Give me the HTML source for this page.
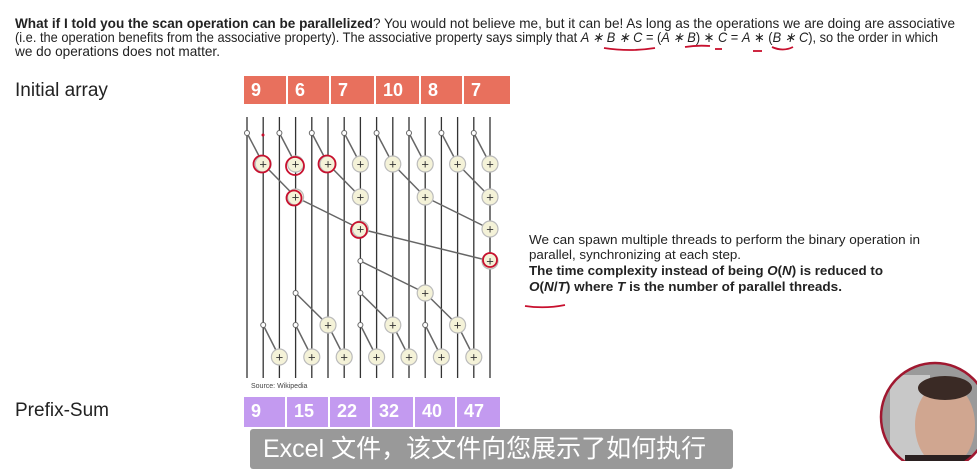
<!DOCTYPE html>
<html><head><meta charset="utf-8"><style>
body{margin:0;width:977px;height:461px;background:#fff;overflow:hidden;position:relative;font-family:"Liberation Sans","Noto Sans CJK SC",sans-serif;color:#222}
.lbl{position:absolute;left:15px;font-size:19px;color:#222}
.arr{position:absolute;display:flex;height:28px}
.arr div{color:#fff;font-weight:bold;font-size:18px;line-height:28px;padding-left:7px;box-sizing:border-box;border-right:2px solid #fff}
.sub{position:absolute;left:250px;top:429px;width:483px;height:40px;background:#999;border-radius:3px;color:#fff;font-size:25px;line-height:40px;padding-left:13px;box-sizing:border-box;overflow:hidden;white-space:nowrap}
</style></head><body>
<div class="lbl" style="top:80px">Initial array</div>
<div class="arr" style="left:244px;top:76px;background:#e8705d">
<div style="width:44px">9</div><div style="width:43px">6</div><div style="width:45px">7</div><div style="width:45px">10</div><div style="width:43px">8</div><div style="width:46px;border:0">7</div></div>
<div class="lbl" style="top:400px">Prefix-Sum</div>
<div class="arr" style="left:244px;top:397px;height:30px;background:#c39af0">
<div style="width:43px">9</div><div style="width:43px">15</div><div style="width:42px">22</div><div style="width:43px">32</div><div style="width:42px">40</div><div style="width:43px;border:0">47</div></div>
<svg width="977" height="461" style="position:absolute;left:0;top:0">
<g font-family="Liberation Sans" font-size="14" fill="#222">
<text x="15" y="28" textLength="940" lengthAdjust="spacingAndGlyphs"><tspan font-weight="bold">What if I told you the scan operation can be parallelized</tspan>? You would not believe me, but it can be! As long as the operations we are doing are associative</text>
<text x="15" y="42" textLength="923" lengthAdjust="spacingAndGlyphs">(i.e. the operation benefits from the associative property). The associative property says simply that <tspan font-style="italic">A ∗ B ∗ C</tspan> = (<tspan font-style="italic">A ∗ B</tspan>) ∗ <tspan font-style="italic">C</tspan> = <tspan font-style="italic">A</tspan> ∗ (<tspan font-style="italic">B ∗ C</tspan>), so the order in which</text>
<text x="15" y="56" textLength="205" lengthAdjust="spacingAndGlyphs">we do operations does not matter.</text>
</g>
<g font-family="Liberation Sans" font-size="13" fill="#222">
<text x="529" y="244" textLength="391" lengthAdjust="spacingAndGlyphs">We can spawn multiple threads to perform the binary operation in</text>
<text x="529" y="259" textLength="212" lengthAdjust="spacingAndGlyphs">parallel, synchronizing at each step.</text>
<text x="529" y="275" font-weight="bold" textLength="354" lengthAdjust="spacingAndGlyphs">The time complexity instead of being <tspan font-style="italic">O</tspan>(<tspan font-style="italic">N</tspan>) is reduced to</text>
<text x="529" y="291" font-weight="bold" textLength="313" lengthAdjust="spacingAndGlyphs"><tspan font-style="italic">O</tspan>(<tspan font-style="italic">N</tspan>/<tspan font-style="italic">T</tspan>) where <tspan font-style="italic">T</tspan> is the number of parallel threads.</text>
</g>
<g stroke="#333" stroke-width="1.3">
<line x1="247" y1="117" x2="247" y2="378"/><line x1="263.2" y1="117" x2="263.2" y2="378"/><line x1="279.4" y1="117" x2="279.4" y2="378"/><line x1="295.6" y1="117" x2="295.6" y2="378"/><line x1="311.8" y1="117" x2="311.8" y2="378"/><line x1="328" y1="117" x2="328" y2="378"/><line x1="344.2" y1="117" x2="344.2" y2="378"/><line x1="360.4" y1="117" x2="360.4" y2="378"/><line x1="376.6" y1="117" x2="376.6" y2="378"/><line x1="392.8" y1="117" x2="392.8" y2="378"/><line x1="409" y1="117" x2="409" y2="378"/><line x1="425.2" y1="117" x2="425.2" y2="378"/><line x1="441.4" y1="117" x2="441.4" y2="378"/><line x1="457.6" y1="117" x2="457.6" y2="378"/><line x1="473.8" y1="117" x2="473.8" y2="378"/><line x1="490" y1="117" x2="490" y2="378"/>
</g>
<g stroke="#666" stroke-width="1.5">
<line x1="247" y1="133" x2="263.2" y2="164"/><line x1="279.4" y1="133" x2="295.6" y2="164"/><line x1="311.8" y1="133" x2="328" y2="164"/><line x1="344.2" y1="133" x2="360.4" y2="164"/><line x1="376.6" y1="133" x2="392.8" y2="164"/><line x1="409" y1="133" x2="425.2" y2="164"/><line x1="441.4" y1="133" x2="457.6" y2="164"/><line x1="473.8" y1="133" x2="490" y2="164"/>
<line x1="263.2" y1="164" x2="295.6" y2="197"/><line x1="328" y1="164" x2="360.4" y2="197"/><line x1="392.8" y1="164" x2="425.2" y2="197"/><line x1="457.6" y1="164" x2="490" y2="197"/>
<line x1="295.6" y1="197" x2="360.4" y2="229"/><line x1="425.2" y1="197" x2="490" y2="229"/>
<line x1="360.4" y1="229" x2="490" y2="261"/>
<line x1="360.4" y1="261" x2="425.2" y2="293"/>
<line x1="295.6" y1="293" x2="328" y2="325"/><line x1="360.4" y1="293" x2="392.8" y2="325"/><line x1="425.2" y1="293" x2="457.6" y2="325"/>
<line x1="263.2" y1="325" x2="279.4" y2="357"/><line x1="295.6" y1="325" x2="311.8" y2="357"/><line x1="328" y1="325" x2="344.2" y2="357"/><line x1="360.4" y1="325" x2="376.6" y2="357"/><line x1="392.8" y1="325" x2="409" y2="357"/><line x1="425.2" y1="325" x2="441.4" y2="357"/><line x1="457.6" y1="325" x2="473.8" y2="357"/>
</g>
<g fill="#fff" stroke="#666">
<circle cx="247" cy="133" r="2.5"/><circle cx="279.4" cy="133" r="2.5"/><circle cx="311.8" cy="133" r="2.5"/><circle cx="344.2" cy="133" r="2.5"/><circle cx="376.6" cy="133" r="2.5"/><circle cx="409" cy="133" r="2.5"/><circle cx="441.4" cy="133" r="2.5"/><circle cx="473.8" cy="133" r="2.5"/>
<circle cx="360.4" cy="261" r="2.5"/><circle cx="295.6" cy="293" r="2.5"/><circle cx="360.4" cy="293" r="2.5"/><circle cx="425.2" cy="293" r="2.5"/>
<circle cx="263.2" cy="325" r="2.5"/><circle cx="295.6" cy="325" r="2.5"/><circle cx="360.4" cy="325" r="2.5"/><circle cx="425.2" cy="325" r="2.5"/>
</g>
<g fill="#f4f2d8" stroke="#bbb" stroke-width="1.2">
<circle cx="263.2" cy="164" r="8"/><circle cx="295.6" cy="164" r="8"/><circle cx="328" cy="164" r="8"/><circle cx="360.4" cy="164" r="8"/><circle cx="392.8" cy="164" r="8"/><circle cx="425.2" cy="164" r="8"/><circle cx="457.6" cy="164" r="8"/><circle cx="490" cy="164" r="8"/>
<circle cx="295.6" cy="197" r="8"/><circle cx="360.4" cy="197" r="8"/><circle cx="425.2" cy="197" r="8"/><circle cx="490" cy="197" r="8"/>
<circle cx="360.4" cy="229" r="8"/><circle cx="490" cy="229" r="8"/><circle cx="490" cy="261" r="8"/><circle cx="425.2" cy="293" r="8"/>
<circle cx="328" cy="325" r="8"/><circle cx="392.8" cy="325" r="8"/><circle cx="457.6" cy="325" r="8"/>
<circle cx="279.4" cy="357" r="8"/><circle cx="311.8" cy="357" r="8"/><circle cx="344.2" cy="357" r="8"/><circle cx="376.6" cy="357" r="8"/><circle cx="409" cy="357" r="8"/><circle cx="441.4" cy="357" r="8"/><circle cx="473.8" cy="357" r="8"/>
</g>
<g fill="#333" font-size="13" font-family="Liberation Sans" text-anchor="middle">
<text x="263.2" y="168.5">+</text><text x="295.6" y="168.5">+</text><text x="328" y="168.5">+</text><text x="360.4" y="168.5">+</text><text x="392.8" y="168.5">+</text><text x="425.2" y="168.5">+</text><text x="457.6" y="168.5">+</text><text x="490" y="168.5">+</text>
<text x="295.6" y="201.5">+</text><text x="360.4" y="201.5">+</text><text x="425.2" y="201.5">+</text><text x="490" y="201.5">+</text>
<text x="360.4" y="233.5">+</text><text x="490" y="233.5">+</text><text x="490" y="265.5">+</text><text x="425.2" y="297.5">+</text>
<text x="328" y="329.5">+</text><text x="392.8" y="329.5">+</text><text x="457.6" y="329.5">+</text>
<text x="279.4" y="361.5">+</text><text x="311.8" y="361.5">+</text><text x="344.2" y="361.5">+</text><text x="376.6" y="361.5">+</text><text x="409" y="361.5">+</text><text x="441.4" y="361.5">+</text><text x="473.8" y="361.5">+</text>
</g>
<text x="251" y="388" font-size="7" fill="#444" font-family="Liberation Sans">Source: Wikipedia</text>
<g fill="none" stroke="#c8102e" stroke-width="1.8">
<circle cx="262" cy="164" r="8.5"/><circle cx="295" cy="166" r="9"/><circle cx="327" cy="164" r="8.5"/><circle cx="294" cy="198" r="7.5"/><circle cx="359" cy="230" r="8"/><circle cx="490" cy="260" r="7"/>
<path d="M604 48 Q630 52 655 48"/><path d="M685 47 Q697 45 710 46"/><path d="M715 49 L722 49"/><path d="M753 51 L762 51"/><path d="M772 47 Q783 52 793 47"/><path d="M525 306 Q545 309 565 305"/>
</g>
<circle cx="263" cy="135" r="1.5" fill="#c8102e"/>
<clipPath id="cl"><circle cx="935" cy="417" r="54"/></clipPath>
<g clip-path="url(#cl)"><rect x="880" y="360" width="110" height="110" fill="#9a9a9a"/><rect x="890" y="375" width="40" height="90" fill="#c8c8c8"/><ellipse cx="945" cy="425" rx="30" ry="42" fill="#d0a690"/><ellipse cx="945" cy="388" rx="27" ry="12" fill="#3a2a25"/><rect x="905" y="455" width="80" height="15" fill="#2a2020"/></g>
<circle cx="935" cy="417" r="54" fill="none" stroke="#a01830" stroke-width="2.5"/>
</svg>
<div class="sub">Excel 文件，该文件向您展示了如何执行</div>
</body></html>
